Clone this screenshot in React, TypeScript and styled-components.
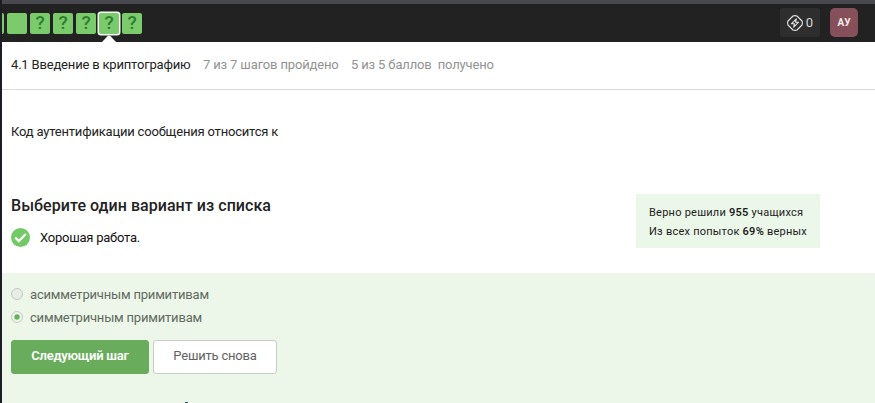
import React from "react";
import styled, { createGlobalStyle } from "styled-components";

const Global = createGlobalStyle`
  * { box-sizing: border-box; }
  body { margin: 0; background: #fff; font-family: Roboto, "Liberation Sans", sans-serif; overflow: hidden; }
`;

const Page = styled.div`
  width: 875px;
  height: 403px;
  overflow: hidden;
  display: flex;
  flex-direction: column;
  border-left: 2px solid #1c1d26;
  color: #222;
  font-size: 13px;
`;

const TopBar = styled.header`
  height: 42px;
  flex: none;
  display: flex;
  justify-content: space-between;
  background: #222;
  border-top: 4px solid #48494e;
`;

const Steps = styled.nav`
  display: flex;
  gap: 3px;
  padding-top: 9px;
`;

const Step = styled.div<{ $active?: boolean; $cut?: boolean }>`
  position: relative;
  width: ${(p) => (p.$cut ? 2 : 20)}px;
  height: 21px;
  border-radius: ${(p) => (p.$cut ? "0 2px 2px 0" : "2px")};
  background: #7bcb6c;
  color: #2f7d30;
  font-size: 19px;
  font-weight: 500;
  line-height: 20px;
  text-align: center;
  box-shadow: ${(p) => (p.$active ? "0 0 0 1.5px #f4fbf3" : "none")};
`;

const Pointer = styled.svg`
  position: absolute;
  left: 2px;
  top: 22px;
  width: 16px;
  height: 8px;
`;

const Account = styled.div`
  display: flex;
  gap: 10px;
  padding: 4px 17px 0 0;
`;

const Score = styled.div`
  width: 40px;
  height: 29px;
  display: flex;
  align-items: center;
  justify-content: center;
  gap: 3px;
  border-radius: 3px;
  background: #2e2e2e;
  color: #d8d8d8;
  font-size: 13px;
`;

const Avatar = styled.div`
  width: 28px;
  height: 29px;
  border-radius: 5px;
  background: #85505a;
  color: #f4eeee;
  font-size: 10px;
  font-weight: 700;
  line-height: 29px;
  text-align: center;
`;

const LessonBar = styled.div`
  height: 48px;
  flex: none;
  display: flex;
  align-items: center;
  padding: 0 0 2px 9px;
  border-bottom: 1px solid #dcdcdc;
  white-space: pre;
`;

const LessonTitle = styled.span`
  width: 192px;
  letter-spacing: -0.18px;
`;

const LessonInfo = styled.span<{ $width: number }>`
  width: ${(p) => p.$width}px;
  color: #929292;
  letter-spacing: -0.15px;
`;

const Question = styled.p`
  margin: 0;
  height: 103px;
  flex: none;
  padding: 34px 0 0 9px;
  line-height: 16px;
  letter-spacing: -0.19px;
`;

const Summary = styled.section`
  height: 80px;
  flex: none;
  display: flex;
  justify-content: space-between;
  padding: 2px 55px 0 9px;
`;

const Heading = styled.h2`
  margin: 0;
  font-size: 16px;
  font-weight: 500;
  line-height: 22px;
  letter-spacing: 0.05px;
`;

const Verdict = styled.div`
  display: flex;
  align-items: center;
  gap: 10px;
  margin-top: 10px;
  height: 20px;
  color: #111;
  letter-spacing: -0.24px;
`;

const Stats = styled.div`
  width: 184px;
  height: 54px;
  margin-top: -1px;
  padding: 9px 0 0 13px;
  background: #ebf7e9;
  font-size: 11px;
  line-height: 19px;
  letter-spacing: 0.24px;
  white-space: nowrap;
  b { font-weight: 600; }
`;

const Answer = styled.section`
  position: relative;
  flex: 1;
  padding: 10px 0 0 9px;
  background: #ecf7e9;
`;

const Option = styled.label`
  display: flex;
  align-items: center;
  gap: 7px;
  height: 23px;
  color: #626a61;
  letter-spacing: -0.19px;
`;

const Radio = styled.span<{ $checked?: boolean }>`
  width: 12px;
  height: 12px;
  margin-top: -1px;
  border: 1px solid #c5cbc3;
  border-radius: 50%;
  background: ${(p) => (p.$checked ? "radial-gradient(circle, #62b455 0 2.2px, #eef5ec 3.2px)" : "#e8eee5")};
`;

const Actions = styled.div`
  display: flex;
  gap: 4px;
  margin-top: 11px;
`;

const Button = styled.button<{ $primary?: boolean }>`
  width: ${(p) => (p.$primary ? 138 : 124)}px;
  height: 34px;
  padding: 0 0 3px;
  border: 1px solid ${(p) => (p.$primary ? "#69ad5c" : "#c8cdc7")};
  border-radius: 3px;
  background: ${(p) => (p.$primary ? "#69ad5c" : "#fff")};
  color: ${(p) => (p.$primary ? "#fff" : "#626262")};
  font: ${(p) => (p.$primary ? 600 : 400)} 13px Roboto, sans-serif;
  letter-spacing: ${(p) => (p.$primary ? -0.25 : -0.2)}px;
`;

const NextEdge = styled.span`
  position: absolute;
  left: 183px;
  bottom: 0;
  width: 3px;
  height: 1px;
  background: #38505a;
`;

export default function App() {
  return (
    <Page>
      <Global />
      <TopBar>
        <Steps>
          <Step $cut />
          <Step />
          <Step>?</Step>
          <Step>?</Step>
          <Step>?</Step>
          <Step $active>
            ?
            <Pointer viewBox="0 0 16 8"><path d="M0 8 6.5 1.2Q8 0 9.5 1.2L16 8Z" fill="#fff" /></Pointer>
          </Step>
          <Step>?</Step>
        </Steps>
        <Account>
          <Score>
            <svg width="16" height="16" viewBox="0 0 16 16" fill="none" stroke="#e4e4e4" strokeWidth="1.1" strokeLinejoin="round">
              <path d="M6 1Q8 .2 10 1L15 6Q15.8 8 15 10L10 15Q8 15.8 6 15L1 10Q.2 8 1 6Z" />
              <path d="M9.3 3.8 4.4 8.8H7.4L6.7 12.2 11.6 7.2H8.6Z" />
            </svg>
            0
          </Score>
          <Avatar>АУ</Avatar>
        </Account>
      </TopBar>
      <LessonBar>
        <LessonTitle>4.1 Введение в криптографию</LessonTitle>
        <LessonInfo $width={148}>7 из 7 шагов пройдено</LessonInfo>
        <LessonInfo $width={150}>5 из 5 баллов  получено</LessonInfo>
      </LessonBar>
      <Question>Код аутентификации сообщения относится к</Question>
      <Summary>
        <div>
          <Heading>Выберите один вариант из списка</Heading>
          <Verdict>
            <svg width="19" height="19" viewBox="0 0 19 19">
              <circle cx="9.5" cy="9.5" r="9.5" fill="#73c966" />
              <path d="m4.2 9.5 3.6 3.6 7-7.2" fill="none" stroke="#fff" strokeWidth="2.2" />
            </svg>
            Хорошая работа.
          </Verdict>
        </div>
        <Stats>
          <div>Верно решили <b>955</b> учащихся</div>
          <div>Из всех попыток <b>69%</b> верных</div>
        </Stats>
      </Summary>
      <Answer>
        <Option><Radio />асимметричным примитивам</Option>
        <Option><Radio $checked />симметричным примитивам</Option>
        <Actions>
          <Button $primary>Следующий шаг</Button>
          <Button>Решить снова</Button>
        </Actions>
        <NextEdge />
      </Answer>
    </Page>
  );
}
